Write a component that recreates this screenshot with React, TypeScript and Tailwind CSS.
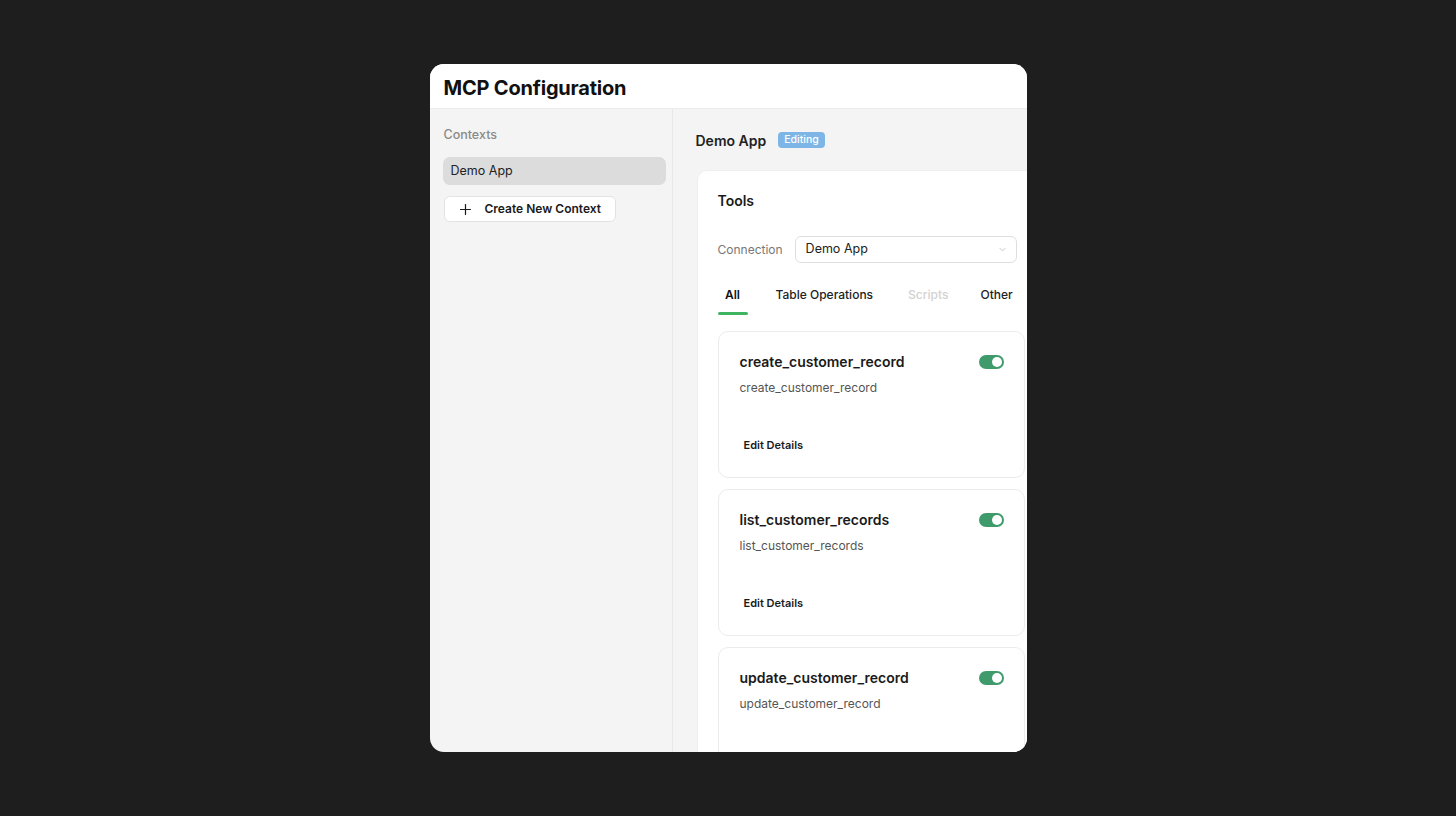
import { Plus, ChevronDown } from 'lucide-react';

const tools = [
  { name: 'create_customer_record', description: 'create_customer_record' },
  { name: 'list_customer_records', description: 'list_customer_records' },
  { name: 'update_customer_record', description: 'update_customer_record' },
];

const Toggle = () => (
  <div className="w-[25px] h-[14px] rounded-full bg-[#3f9b6b] flex items-center justify-end px-[2px] shrink-0">
    <div className="w-[10px] h-[10px] rounded-full bg-white" />
  </div>
);

const ToolCard = ({ name, description }: { name: string; description: string }) => (
  <div className="w-[307px] shrink-0 bg-white border border-[#ececec] rounded-[10px] pl-[21px] pr-[20px] pt-[20px] pb-[22px]">
    <div className="flex items-center justify-between h-5">
      <span className="text-[14px] font-semibold text-[#1a1a1a] leading-5">{name}</span>
      <Toggle />
    </div>
    <p className="mt-[7px] text-[12px] leading-[18px] text-[#555]">{description}</p>
    <button className="mt-[40px] ml-[4px] text-[11px] font-semibold text-[#1a1a1a] leading-4">
      Edit Details
    </button>
  </div>
);

const App = () => {
  return (
    <div
      className="w-full h-screen bg-[#1e1e1e] flex items-start justify-center pt-[64px]"
      style={{ fontFamily: 'Inter, "Noto Sans", sans-serif' }}
    >
      <div className="w-[597px] h-[688px] bg-[#f4f4f4] rounded-[14px] overflow-hidden flex flex-col">
        {/* header */}
        <div className="h-[45px] shrink-0 bg-white flex items-center pt-[3px] px-[14px] border-b border-[#ececec]">
          <h1 className="text-[20px] font-bold text-[#111] tracking-[-0.2px]">MCP Configuration</h1>
        </div>

        <div className="flex flex-1 min-h-0">
          {/* sidebar */}
          <div className="w-[243px] shrink-0 border-r border-[#e8e8e8] pt-[17px] pl-[13px] pr-[6px]">
            <div className="text-[12.5px] font-medium text-[#8a8a8a] leading-[18px] pl-[1px]">Contexts</div>
            <div className="mt-[13px] h-[28px] rounded-[7px] bg-[#dcdcdc] flex items-center px-[8px] text-[12.5px] text-[#222]">
              Demo App
            </div>
            <button className="mt-[11px] ml-[1px] h-[26px] w-[172px] bg-white border border-[#e2e2e2] rounded-[6px] flex items-center gap-[11px] pl-[12px] text-[12px] font-semibold text-[#1a1a1a]">
              <Plus size={17} strokeWidth={1.7} />
              Create New Context
            </button>
          </div>

          {/* main */}
          <div className="flex-1 min-w-0 overflow-hidden pt-[21px] pl-[23px]">
            <div className="flex items-center gap-[12px] h-5">
              <span className="text-[14px] font-semibold text-[#222]">Demo App</span>
              <span className="h-[16px] px-[6px] rounded-[4px] bg-[#7db6e6] text-white text-[10.5px] font-medium flex items-center">
                Editing
              </span>
            </div>

            <div className="mt-[20px] ml-[1px] w-[349px] bg-white border border-[#eeeeee] rounded-[10px] pt-[20px] px-[20px] pb-[20px]">
              <div className="text-[14px] font-semibold text-[#1a1a1a] leading-5">Tools</div>

              <div className="mt-[25px] flex items-center gap-[12px]">
                <span className="text-[12px] text-[#777]">Connection</span>
                <div className="w-[222px] h-[27px] border border-[#dedede] rounded-[6px] flex items-center justify-between pl-[10px] pr-[8px]">
                  <span className="text-[12.5px] text-[#222]">Demo App</span>
                  <ChevronDown size={11} className="text-[#c4c4c4]" />
                </div>
              </div>

              <div className="mt-[22px] flex items-start text-[12px] font-medium">
                <div className="flex flex-col items-center w-[30px]">
                  <span className="leading-5 font-semibold text-[#111]">All</span>
                  <div className="mt-[7px] h-[3px] w-[30px] rounded-full bg-[#3fb560]" />
                </div>
                <span className="ml-[28px] leading-5 text-[#222]">Table Operations</span>
                <span className="ml-[35px] leading-5 text-[#d2d2d2]">Scripts</span>
                <span className="ml-[32px] leading-5 text-[#222]">Other</span>
              </div>

              <div className="mt-[16px] flex flex-col gap-[11px]">
                {tools.map((t) => (
                  <ToolCard key={t.name} name={t.name} description={t.description} />
                ))}
              </div>
            </div>
          </div>
        </div>
      </div>
    </div>
  );
};

export default App;
